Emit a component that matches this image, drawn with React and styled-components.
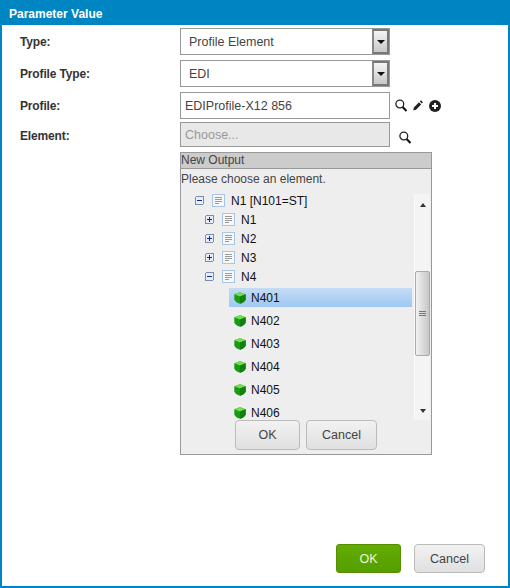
import React from "react";
import styled, { createGlobalStyle } from "styled-components";

const Global = createGlobalStyle`
  html, body { margin: 0; padding: 0; background: #fff; }
  * { box-sizing: border-box; }
  body { font-family: "Liberation Sans", Arial, sans-serif; font-size: 12px; color: #333; }
`;

const Dialog = styled.div`
  width: 510px; height: 588px; display: flex; flex-direction: column;
  border: solid #0085c3; border-width: 0 2px 2px 2px; background: #fff;
`;
const Title = styled.div`
  height: 25px; flex: none; margin: 0 -2px; padding: 7px 0 0 9px; background: #0085c3;
  color: #fff; font-weight: bold; font-size: 12px; line-height: 14px;
`;
const Body = styled.div`
  flex: 1; display: flex; flex-direction: column; padding: 3px 0 0 18px;
`;
const Row = styled.div`
  display: flex; align-items: flex-start; height: ${p => p.$h || 27}px; margin-bottom: ${p => p.$mb ?? 5}px;
`;
const Label = styled.div`
  width: 160px; flex: none; font-weight: bold; font-size: 12px; letter-spacing: -0.15px; line-height: 14px; padding-top: 7px; color: #333;
`;
const Select = styled.div`
  width: 210px; height: 27px; border: 1px solid #999; background: #fff;
  display: flex; align-items: center; justify-content: space-between; padding-left: 8px;
  font-size: 12.5px; color: #444;
`;
const DropBtn = styled.div`
  width: 17px; height: 25px; border: 2px solid #777; border-left-color: #888; background: linear-gradient(#f4f4f4, #c8c8c8);
  display: flex; align-items: center; justify-content: center;
`;
const Caret = styled.div`
  width: 0; height: 0; border: 4px solid transparent; border-top: 4px solid #111; border-bottom: 0;
`;
const TextInput = styled.div`
  width: 210px; height: ${p => p.$h || 27}px; border: 1px solid #999; background: ${p => p.$disabled ? "#e8e8e8" : "#fff"};
  color: ${p => p.$disabled ? "#999" : "#444"}; padding-left: 4px; display: flex; align-items: center; font-size: 12.5px;
`;
const Icons = styled.div`
  display: flex; align-items: center; gap: 6px; height: 27px; padding-left: ${p => p.$pl}px; margin-top: ${p => p.$mt || 0}px;
`;
const Panel = styled.div`
  margin: 0 0 0 160px; width: 252px; height: 303px; border: 1px solid #999; background: #eee; flex: none;
  display: flex; flex-direction: column;
`;
const PanelHead = styled.div`
  height: 16px; flex: none; background: #ccc; border-bottom: 1px solid #999; line-height: 15px; font-size: 12px; color: #444;
`;
const Hint = styled.div`
  height: 25px; flex: none; padding-top: 3px; line-height: 14px; color: #444; font-size: 12px;
`;
const TreeWrap = styled.div`
  display: flex; height: 226px; flex: none;
`;
const Tree = styled.div`
  width: 233px; height: 229px; margin-top: -3px; flex: none; overflow: hidden;
`;
const Node = styled.div`
  height: 19px; display: flex; align-items: center; padding-left: ${p => p.$indent}px; color: #111; font-size: 12px;
  & > svg:first-child { margin-right: 8px; }
  & > svg:nth-child(2) { margin-right: 6px; }
`;
const Leaf = styled.div`
  height: ${p => p.$selected ? 19 : 23}px; margin: ${p => p.$selected ? "2px 2px 2px 48px" : "0 2px 0 48px"};
  display: flex; align-items: center; padding-left: 5px; gap: 5px; color: #111; font-size: 12px;
  background: ${p => p.$selected ? "linear-gradient(#c4dcf6, #9ec8f2)" : "transparent"};
`;
const Scrollbar = styled.div`
  width: 16px; height: 226px; background: #f4f4f4; display: flex; flex-direction: column; align-items: center;
  border-left: 1px solid #fafafa;
`;
const ArrowUp = styled.div`
  width: 0; height: 0; margin-top: 9px; border: 3.5px solid transparent; border-bottom: 4px solid #333; border-top: 0;
`;
const ArrowDown = styled.div`
  width: 0; height: 0; margin-top: 53px; border: 3.5px solid transparent; border-top: 4px solid #333; border-bottom: 0;
`;
const Thumb = styled.div`
  width: 15px; height: 85px; margin-top: 64px; border: 1px solid #aaa; border-radius: 2px; background: linear-gradient(90deg, #f2f2f2, #c6c6c6);
  display: flex; flex-direction: column; align-items: center; justify-content: center; gap: 1px;
`;
const Grip = styled.div`width: 7px; height: 1px; background: #777;`;
const PanelButtons = styled.div`
  display: flex; gap: 6px; padding-left: 54px;
`;
const GrayButton = styled.button`
  width: ${p => p.$w}px; height: ${p => p.$h || 30}px; border: 1px solid #bbb; border-radius: 4px; padding: 0;
  background: linear-gradient(#f2f2f2, #e0e0e0); color: #444; font: 12.5px "Liberation Sans", Arial, sans-serif;
`;
const Footer = styled.div`
  margin-top: auto; display: flex; gap: 13px; padding: 0 0 13px 316px;
`;
const GreenButton = styled.button`
  width: 65px; height: 29px; border: 1px solid #558f00; border-radius: 3px; padding: 0;
  background: linear-gradient(#64ac00, #549e00); color: #eaf6da; font: 12.5px "Liberation Sans", Arial, sans-serif;
`;

const Search = () => (
  <svg width="12" height="13" viewBox="0 0 12 13" fill="none">
    <circle cx="4.8" cy="5" r="3.9" stroke="#222" strokeWidth="1.3" />
    <path d="M7.6 8L11.5 12" stroke="#111" strokeWidth="2.1" />
  </svg>
);
const Pencil = () => (
  <svg width="10" height="11" viewBox="0 0 10 11">
    <path d="M0.2 10.6L0.9 7.6L6 2.2L8.2 4.4L3 9.8Z" fill="#222" />
    <path d="M6.9 1.4L8 0.3L9.9 2.3L8.9 3.5Z" fill="#222" />
  </svg>
);
const PlusCircle = () => (
  <svg width="12" height="12" viewBox="0 0 12 12">
    <circle cx="6" cy="6" r="6" fill="#222" />
    <path d="M6 3V9M3 6H9" stroke="#fff" strokeWidth="2" />
  </svg>
);
const Toggle = ({ open }) => (
  <svg width="9" height="9" viewBox="0 0 9 9" shapeRendering="crispEdges">
    <rect x="0.5" y="0.5" width="8" height="8" rx="1.5" fill="#e6ecf8" stroke="#7c8cae" />
    <path d={open ? "M2 4.5H7" : "M2 4.5H7M4.5 2V7"} stroke="#102a80" />
  </svg>
);
const Doc = () => (
  <svg width="13" height="13" viewBox="0 0 13 13" shapeRendering="crispEdges">
    <rect x="0.5" y="0.5" width="12" height="12" rx="1" fill="#f7f7f7" stroke="#a9c4e4" />
    <path d="M3 3.5H10M3 5.5H10M3 7.5H10M3 9.5H7" stroke="#9a9a9a" />
  </svg>
);
const Cube = () => (
  <svg width="12" height="12" viewBox="0 0 12 12">
    <path d="M6 0.3L11.7 2.2V7.5Q10.8 10.2 6 11.8Q1.2 10.2 0.3 7.5V2.2Z" fill="#1c9a16" />
    <path d="M6 0.3L11.7 2.2L6 4.6L0.3 2.2Z" fill="#72e04c" />
    <path d="M6 4.6L11.7 2.2V7.5Q10.8 10.2 6 11.8Z" fill="#127f10" />
  </svg>
);

const Branch = ({ indent, open, children }) => (
  <Node $indent={indent}>
    <Toggle open={open} />
    <Doc />
    <span>{children}</span>
  </Node>
);

export default function App() {
  return (
    <>
      <Global />
      <Dialog>
        <Title>Parameter Value</Title>
        <Body>
          <Row>
            <Label>Type:</Label>
            <Select>Profile Element<DropBtn><Caret /></DropBtn></Select>
          </Row>
          <Row>
            <Label>Profile Type:</Label>
            <Select>EDI<DropBtn><Caret /></DropBtn></Select>
          </Row>
          <Row $mb={3}>
            <Label>Profile:</Label>
            <TextInput>EDIProfile-X12 856</TextInput>
            <Icons $pl={5}><Search /><Pencil /><PlusCircle /></Icons>
          </Row>
          <Row $h={25} $mb={5}>
            <Label>Element:</Label>
            <TextInput $h={25} $disabled>Choose...</TextInput>
            <Icons $pl={9} $mt={2}><Search /></Icons>
          </Row>
          <Panel>
            <PanelHead>New Output</PanelHead>
            <Hint>Please choose an element.</Hint>
            <TreeWrap>
              <Tree>
                <Branch indent={14} open>N1 [N101=ST]</Branch>
                <Branch indent={24}>N1</Branch>
                <Branch indent={24}>N2</Branch>
                <Branch indent={24}>N3</Branch>
                <Branch indent={24} open>N4</Branch>
                <Leaf $selected><Cube />N401</Leaf>
                <Leaf><Cube />N402</Leaf>
                <Leaf><Cube />N403</Leaf>
                <Leaf><Cube />N404</Leaf>
                <Leaf><Cube />N405</Leaf>
                <Leaf><Cube />N406</Leaf>
              </Tree>
              <Scrollbar>
                <ArrowUp />
                <Thumb><Grip /><Grip /><Grip /></Thumb>
                <ArrowDown />
              </Scrollbar>
            </TreeWrap>
            <PanelButtons>
              <GrayButton $w={65}>OK</GrayButton>
              <GrayButton $w={71}>Cancel</GrayButton>
            </PanelButtons>
          </Panel>
          <Footer>
            <GreenButton>OK</GreenButton>
            <GrayButton $w={71} $h={29}>Cancel</GrayButton>
          </Footer>
        </Body>
      </Dialog>
    </>
  );
}
